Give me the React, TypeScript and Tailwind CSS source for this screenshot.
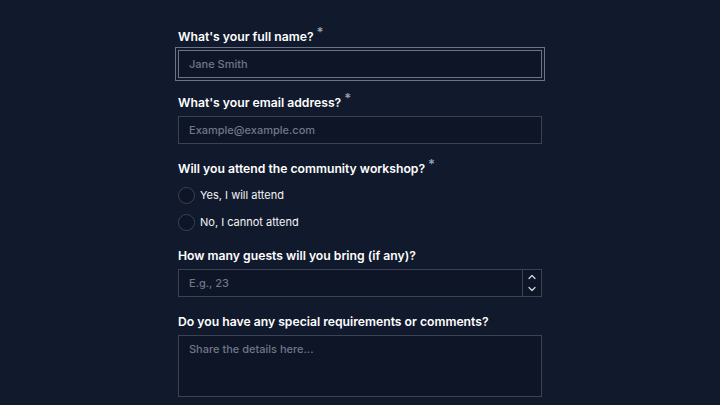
import { ChevronUp, ChevronDown } from 'lucide-react';

const Label = ({ text, required }: { text: string; required?: boolean }) => (
  <label className="flex items-start h-[18px] text-[12.2px] leading-[18px] font-semibold text-white">
    {text}
    {required && <span className="ml-[3px] -mt-[5px] text-[13px] text-gray-400">*</span>}
  </label>
);

const inputCls =
  'h-[28px] w-full bg-[#0e1527] border border-[#3a4354] px-[10px] text-[11px] font-medium text-gray-200 placeholder:text-[#6f7788] focus:outline-none';

const App = () => {
  return (
    <div className="min-h-screen h-[405px] bg-[#111a2c] font-['Inter',sans-serif] overflow-hidden">
      <form className="w-[364px] ml-[178px] pt-[28px] flex flex-col gap-[16px]">
        {/* Full name */}
        <div className="flex flex-col gap-[4px]">
          <Label text="What's your full name?" required />
          <input
            className={`${inputCls} border-[#6b7385] shadow-[0_0_0_2px_#111a2c,0_0_0_3px_#6b7385]`}
            placeholder="Jane Smith"
          />
        </div>

        {/* Email */}
        <div className="flex flex-col gap-[4px]">
          <Label text="What's your email address?" required />
          <input className={inputCls} placeholder="Example@example.com" />
        </div>

        {/* Attendance */}
        <div className="flex flex-col">
          <Label text="Will you attend the community workshop?" required />
          <div className="flex flex-col gap-[10px] mt-[9px]">
            {['Yes, I will attend', 'No, I cannot attend'].map((opt) => (
              <label key={opt} className="flex items-center gap-[5px] h-[17px] text-[11px] text-gray-100">
                <span className="w-[17px] h-[17px] rounded-full border border-[#3a4354] bg-[#0e1527]" />
                {opt}
              </label>
            ))}
          </div>
        </div>

        {/* Guests */}
        <div className="flex flex-col gap-[4px]">
          <Label text="How many guests will you bring (if any)?" />
          <div className="flex h-[28px] border border-[#3a4354] bg-[#0e1527]">
            <input
              className="flex-1 min-w-0 bg-transparent px-[10px] text-[11px] font-medium text-gray-200 placeholder:text-[#6f7788] focus:outline-none"
              placeholder="E.g., 23"
            />
            <div className="w-[19px] border-l border-[#3a4354] flex flex-col items-center justify-center text-gray-300">
              <ChevronUp size={12} strokeWidth={2.5} />
              <ChevronDown size={12} strokeWidth={2.5} />
            </div>
          </div>
        </div>

        {/* Comments */}
        <div className="flex flex-col gap-[4px]">
          <Label text="Do you have any special requirements or comments?" />
          <textarea
            className="h-[62px] w-full resize-none bg-[#0e1527] border border-[#3a4354] px-[10px] py-[5px] text-[11px] font-medium text-gray-200 placeholder:text-[#6f7788] focus:outline-none"
            placeholder="Share the details here..."
          />
        </div>
      </form>
    </div>
  );
};

export default App;
